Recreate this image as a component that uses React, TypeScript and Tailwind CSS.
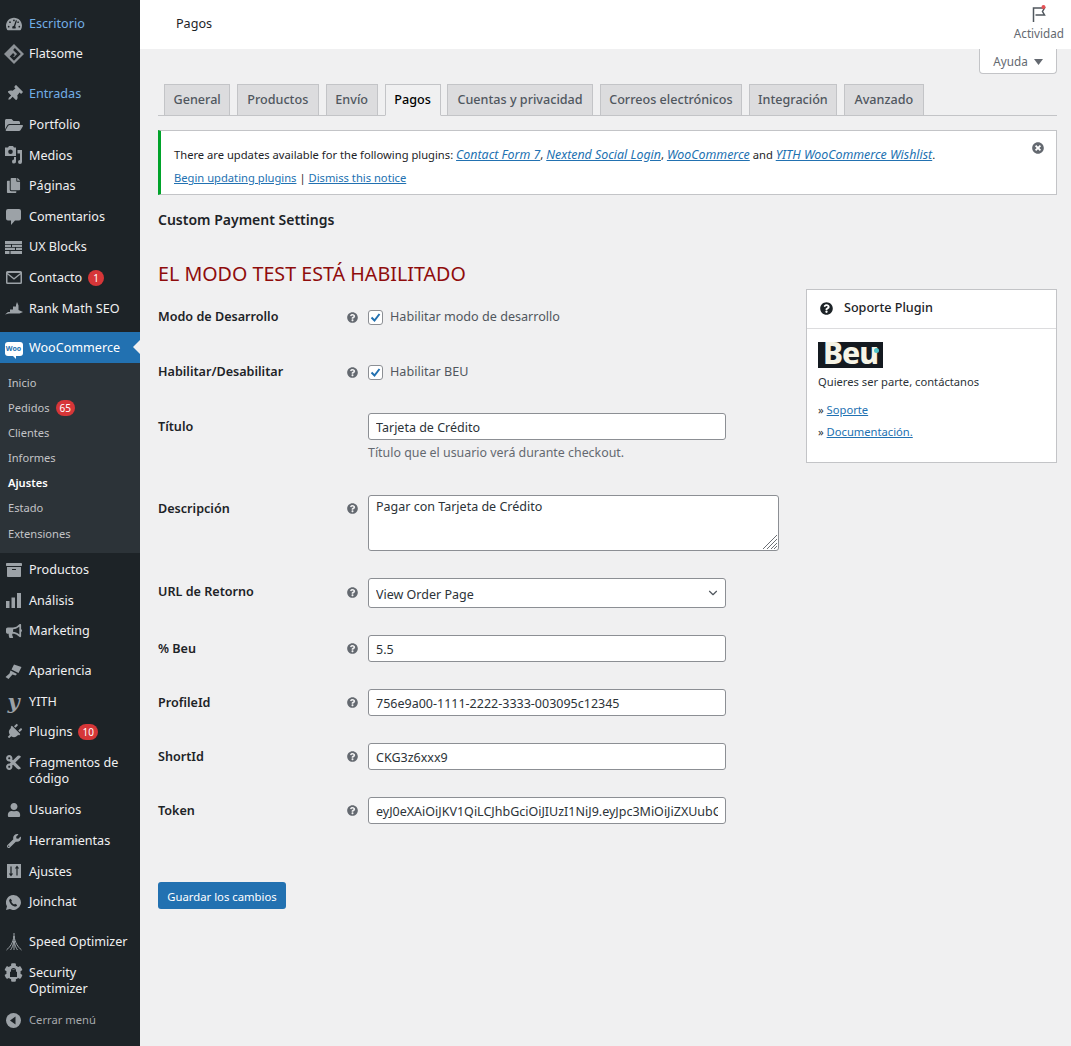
import React from 'react';
import {
  FaTachometerAlt, FaThumbtack, FaFolderOpen, FaCopy, FaArchive, FaBullhorn, FaPlug, FaCut, FaUser, FaWrench, FaCog, FaQuestionCircle, FaTimesCircle,
} from 'react-icons/fa';
import { ChevronDown } from 'lucide-react';

const font = "font-['Noto_Sans',sans-serif]";

const Diamond = () => (
  <svg width="22" height="22" viewBox="0 0 22 22" fill="none">
    <path d="M11 1 21 11 11 21 1 11Z" fill="#8c9196" />
    <path d="M11 6 16 11 11 16 8.5 13.5 11 11" stroke="#1d2327" strokeWidth="2.5" />
  </svg>
);
const Media = () => (
  <svg width="18" height="18" viewBox="0 0 18 18" fill="#9ca2a7">
    <path d="M0 1.500h3L4 0h4l1 1.500h2v8.500H0Zm5.500 2a2.300 2.300 0 1 0 0 4.600 2.300 2.300 0 0 0 0-4.600Z" fillRule="evenodd" />
    <path d="M12.500 4H17v12a2 2 0 1 1-2-2V7.500h-2.500Z" />
    <path d="M11 11v4.500a2 2 0 1 1-2-1.900V11Z" />
  </svg>
);
const Bubble = () => (
  <svg width="15" height="16" viewBox="0 0 15 16" fill="#9ca2a7">
    <path d="M2 0h11a2 2 0 0 1 2 2v7.500a2 2 0 0 1-2 2H9L5 16v-4.500H2a2 2 0 0 1-2-2V2a2 2 0 0 1 2-2Z" />
  </svg>
);
const Bricks = () => (
  <svg width="17" height="13" viewBox="0 0 17 13" fill="#9ca2a7">
    <path d="M0 0h17v3H0ZM0 3.700h6v2.300H0ZM7 3.700h10v2.300H7ZM0 6.800h10v2.300H0ZM11 6.800h6v2.300h-6ZM0 10h4.500v3H0ZM5.500 10H17v3H5.500Z" />
  </svg>
);
const Mail = () => (
  <svg width="16" height="13" viewBox="0 0 16 13" fill="#9ca2a7">
    <path d="M1.500 0h13A1.500 1.500 0 0 1 16 1.500v10a1.500 1.500 0 0 1-1.500 1.500h-13A1.500 1.500 0 0 1 0 11.500v-10A1.500 1.500 0 0 1 1.500 0Zm.2 2 6.300 5 6.300-5ZM1.500 3.500v8h13v-8L8 8.800Z" fillRule="evenodd" />
  </svg>
);
const RankMath = () => (
  <svg width="18" height="13" viewBox="0 0 18 13" fill="#9ca2a7">
    <path d="M0 12.500 3 10h2V7.500h3V4.500h3V3l1-3 1.500 3.500v4.500l4.500 2-3.500 1.500H4Z" />
  </svg>
);
const Bars = () => (
  <svg width="15" height="15" viewBox="0 0 15 15" fill="#9ca2a7">
    <path d="M0 8h3.500v7H0ZM5.500 4.500H9V15H5.500ZM11 0h4v15h-4Z" />
  </svg>
);
const Brush = () => (
  <svg width="17" height="15" viewBox="0 0 17 15" fill="#9ca2a7">
    <path d="M9 .5 16.500 3 13.500 9 6.500 5.500ZM5.500 6.500l6.500 3.500-1.500 1.500-3-1-4 4.500L.5 13l4-3.500Z" />
  </svg>
);
const Sliders = () => (
  <svg width="14" height="14" viewBox="0 0 14 14">
    <path d="M0 0h14v14H0Z" fill="#9ca2a7" />
    <path d="M4 2.500v9M2.500 9.500 4 11.500l1.500-2M10 11.500v-9M8.500 4.500 10 2.500l1.500 2" stroke="#1d2327" strokeWidth="1.200" fill="none" />
  </svg>
);
const Whats = () => (
  <svg width="15" height="15" viewBox="0 0 15 15">
    <path d="M7.500 0a7.500 7.500 0 1 1-3.600 14.100L0 15l1-3.700A7.500 7.500 0 0 1 7.500 0Z" fill="#9ca2a7" />
    <path d="M4.700 3.700 6 5.800l-.7 1c.6 1.200 1.500 2 2.800 2.700l1-.8 2 1.300c-.2 1.200-1.400 1.800-2.500 1.500C6 10.800 3.800 8.500 3.200 6 3 5 3.600 4 4.700 3.700Z" fill="#1d2327" />
  </svg>
);
const Speed = () => (
  <svg width="16" height="18" viewBox="0 0 16 18" fill="none" stroke="#9ca2a7" strokeWidth="1">
    <path d="M8 0v17M8 3C7 10 4 14 0.500 17M8 3c1 7 4 11 7.500 14M8 8c-.8 4-2 7-3.500 9M8 8c.8 4 2 7 3.500 9" />
  </svg>
);
const Collapse = () => (
  <svg width="15" height="15" viewBox="0 0 15 15">
    <circle cx="7.500" cy="7.500" r="7.500" fill="#9ca2a7" />
    <path d="M9.500 3.500v8L4 7.500Z" fill="#1d2327" />
  </svg>
);
const Gear = () => (
  <span className="relative flex items-center justify-center">
    <FaCog size={19} color="#9ca2a7" />
    <svg className="absolute left-[6px] top-[5px]" width="7" height="9" viewBox="0 0 7 9" fill="#1d2327">
      <path d="M1 4V2.500a2.500 2.500 0 0 1 5 0V4h1v5H0V4Zm1 0h3V2.500a1.500 1.500 0 0 0-3 0Z" fillRule="evenodd" />
    </svg>
  </span>
);
const WooIcon = () => (
  <span className="relative flex h-[14px] w-[18px] items-center justify-center rounded-[3px] bg-white text-[7px] font-bold leading-none text-[#2271b1]">
    Woo
    <span className="absolute -bottom-[3px] left-[8px] h-0 w-0 border-l-[3px] border-t-[3px] border-l-transparent border-t-white" />
  </span>
);
const Yith = () => <span className="font-['DejaVu_Serif',serif] text-[21px] font-bold italic leading-none text-[#9ca2a7]">y</span>;

type Item = { label: string; icon: React.ReactNode; blue?: boolean; badge?: string; gap?: boolean; two?: boolean };

const gray = '#9ca2a7';
const topItems: Item[] = [
  { label: 'Escritorio', icon: <FaTachometerAlt size={16} color={gray} />, blue: true },
  { label: 'Flatsome', icon: <Diamond />, gap: true },
  { label: 'Entradas', icon: <FaThumbtack size={16} color={gray} className="rotate-45" />, blue: true },
  { label: 'Portfolio', icon: <FaFolderOpen size={18} color={gray} /> },
  { label: 'Medios', icon: <Media /> },
  { label: 'Páginas', icon: <FaCopy size={15} color={gray} /> },
  { label: 'Comentarios', icon: <Bubble /> },
  { label: 'UX Blocks', icon: <Bricks /> },
  { label: 'Contacto', icon: <Mail />, badge: '1' },
  { label: 'Rank Math SEO', icon: <RankMath /> },
];
const subItems = ['Inicio', 'Pedidos', 'Clientes', 'Informes', 'Ajustes', 'Estado', 'Extensiones'];
const bottomItems: Item[] = [
  { label: 'Productos', icon: <FaArchive size={16} color={gray} /> },
  { label: 'Análisis', icon: <Bars /> },
  { label: 'Marketing', icon: <FaBullhorn size={16} color={gray} />, gap: true },
  { label: 'Apariencia', icon: <Brush /> },
  { label: 'YITH', icon: <Yith /> },
  { label: 'Plugins', icon: <FaPlug size={16} color={gray} className="rotate-45" />, badge: '10' },
  { label: 'Fragmentos de código', icon: <FaCut size={17} color={gray} />, two: true },
  { label: 'Usuarios', icon: <FaUser size={14} color={gray} /> },
  { label: 'Herramientas', icon: <FaWrench size={14} color={gray} /> },
  { label: 'Ajustes', icon: <Sliders /> },
  { label: 'Joinchat', icon: <Whats />, gap: true },
  { label: 'Speed Optimizer', icon: <Speed /> },
  { label: 'Security Optimizer', icon: <Gear />, two: true },
];

const Badge = ({ text }: { text: string }) => (
  <span className="ml-[6px] flex h-[16px] min-w-[16px] items-center justify-center rounded-full bg-[#d63638] px-[4px] text-[10px] leading-none text-white">{text}</span>
);

const MenuRow = ({ item }: { item: Item }) => (
  <div className={`flex items-start ${item.two ? 'h-[47.400px]' : 'h-[30.6px]'} ${item.gap ? 'mb-[9.4px]' : ''}`}>
    <span className="flex h-[30.6px] w-[26px] shrink-0 items-center justify-center pl-[1px]">{item.icon}</span>
    <span className={`ml-[3px] flex max-w-[105px] items-center pt-[7.500px] text-[12.6px] leading-[16px] ${item.blue ? 'text-[#72aee6]' : 'text-[#f0f0f1]'}`}>
      {item.label}
      {item.badge && <Badge text={item.badge} />}
    </span>
  </div>
);

const Sidebar = () => (
  <aside className="min-h-[1046px] w-[140px] shrink-0 bg-[#1d2327] pt-[8.300px]">
    {topItems.map((i) => <MenuRow key={i.label} item={i} />)}
    <div className="relative mt-[8.700px] flex h-[31px] items-center bg-[#2271b1] pt-[2px]">
      <span className="flex w-[26px] justify-center pl-[1px]"><WooIcon /></span>
      <span className="ml-[3px] text-[12.6px] text-white">WooCommerce</span>
      <span className="absolute right-0 top-[8px] h-0 w-0 border-y-[7px] border-r-[7px] border-y-transparent border-r-[#f0f0f1]" />
    </div>
    <div className="mb-[1.300px] h-[190px] bg-[#2c3338] pt-[7px]">
      {subItems.map((s) => (
        <div key={s} className={`flex h-[25.170px] items-center pl-[8px] text-[11.100px] ${s === 'Ajustes' ? 'font-semibold text-white' : 'text-[#c3c4c7]'}`}>
          {s}
          {s === 'Pedidos' && <Badge text="65" />}
        </div>
      ))}
    </div>
    {bottomItems.map((i) => <MenuRow key={i.label} item={i} />)}
    <div className="flex h-[30.6px] items-center">
      <span className="flex w-[26px] justify-center pl-[1px]"><Collapse /></span>
      <span className="ml-[3px] text-[11.200px] text-[#a7aaad]">Cerrar menú</span>
    </div>
  </aside>
);

const tabs = [
  { label: 'General', w: 'w-[65.600px]' },
  { label: 'Productos', w: 'w-[82px]' },
  { label: 'Envío', w: 'w-[52.200px]' },
  { label: 'Pagos', w: 'w-[56px]' },
  { label: 'Cuentas y privacidad', w: 'w-[145.400px]' },
  { label: 'Correos electrónicos', w: 'w-[142.600px]' },
  { label: 'Integración', w: 'w-[88px]' },
  { label: 'Avanzado', w: 'w-[80.200px]' },
];

const Help = () => <FaQuestionCircle size={11} color="#646970" className="shrink-0" />;

const Check = () => (
  <span className="flex h-[15px] w-[15px] items-center justify-center rounded-[3px] border border-[#8c8f94] bg-white">
    <svg width="13" height="13" viewBox="0 0 13 13" fill="none" stroke="#2271b1" strokeWidth="2"><path d="M2.500 6.500 5.500 9.500 10.500 3" /></svg>
  </span>
);

const Field = ({ value }: { value: string }) => (
  <input readOnly value={value} className="h-[27px] w-[358px] rounded-[3px] border border-[#8c8f94] bg-white px-[7px] pt-[1px] text-[12.500px] text-[#2c3338] outline-none" />
);

type RowProps = { label: string; className: string; help?: boolean; labelTop?: string; helpTop?: string; children: React.ReactNode };

const Row = ({ label, className, help = true, labelTop = 'mt-[6px]', helpTop = 'mt-[7.500px]', children }: RowProps) => (
  <div className={`flex items-start ${className}`}>
    <span className={`w-[188px] text-[12.6px] font-semibold leading-[16px] text-[#1d2327] ${labelTop}`}>{label}</span>
    <span className={`ml-[1px] block h-[11px] w-[21px] leading-none ${helpTop}`}>{help && <Help />}</span>
    <div>{children}</div>
  </div>
);

const NoticeLink = ({ children }: { children: React.ReactNode }) => (
  <a className="text-[12.400px] italic text-[#2271b1] underline">{children}</a>
);

const Notice = () => (
  <div className="relative mt-[14px] h-[65px] border border-l-[3px] border-[#c3c4c7] border-l-[#00a32a] bg-white pl-[13px] pt-[15px] text-[11.200px] leading-[18px] text-[#1d2327]">
    <p>
      There are updates available for the following plugins:{' '}
      <NoticeLink>Contact Form 7</NoticeLink>,{' '}
      <NoticeLink>Nextend Social Login</NoticeLink>,{' '}
      <NoticeLink>WooCommerce</NoticeLink> and{' '}
      <NoticeLink>YITH WooCommerce Wishlist</NoticeLink>.
    </p>
    <p className="mt-[5px]">
      <a className="text-[#2271b1] underline">Begin updating plugins</a> | <a className="text-[#2271b1] underline">Dismiss this notice</a>
    </p>
    <FaTimesCircle size={12} color="#646970" className="absolute right-[12px] top-[11px]" />
  </div>
);

const SupportCard = () => (
  <div className="mt-[59px] h-[174px] w-[251px] border border-[#c3c4c7] bg-white">
    <div className="flex h-[39px] items-center border-b border-[#dcdcde] pb-[2px] pl-[13px] text-[12.6px] font-medium text-[#1d2327]">
      <FaQuestionCircle size={13} color="#1d2327" />
      <span className="ml-[11px]">Soporte Plugin</span>
    </div>
    <div className="pl-[11px] pt-[13px] text-[11.200px] text-[#2c3338]">
      <div className="relative flex h-[26px] w-[65px] items-center justify-center bg-[#141a20] pb-[5px] text-[30px] font-extrabold leading-[26px] tracking-[-1px] text-[#f6f4e6]">
        Beu
        <span className="absolute right-[4px] top-[6px] h-[5px] w-[5px] rounded-full bg-[#4fc3c9]" />
      </div>
      <p className="mt-[6px] leading-[16px]">Quieres ser parte, contáctanos</p>
      <p className="mt-[12px] leading-[16px]">» <a className="text-[#2271b1] underline">Soporte</a></p>
      <p className="mt-[6px] leading-[16px]">» <a className="text-[#2271b1] underline">Documentación.</a></p>
    </div>
  </div>
);

export default function App() {
  return (
    <div className={`flex min-h-[1046px] bg-[#f0f0f1] ${font}`}>
      <Sidebar />
      <main className="min-w-0 flex-1">
        <header className="flex h-[49px] items-start justify-between bg-white pl-[36px] pr-[7px]">
          <span className="pt-[15px] text-[12.6px] leading-[18px] text-[#1d2327]">Pagos</span>
          <div className="flex flex-col items-center pt-[5px]">
            <svg width="18" height="18" viewBox="0 0 18 18" fill="none">
              <path d="M3.500 17V3h11l-2 3.500 2 3.500h-9" stroke="#50575e" strokeWidth="1.500" />
              <circle cx="13.500" cy="2" r="2" fill="#e65054" />
            </svg>
            <span className="mt-[2px] text-[11.700px] leading-[16px] text-[#646970]">Actividad</span>
          </div>
        </header>
        <div className="pl-[18px] pr-[14px]">
          <div className="flex justify-end">
            <div className="flex h-[25px] w-[78px] items-center justify-center gap-[6px] rounded-b-[4px] border border-t-0 border-[#c3c4c7] bg-white pt-[1px] text-[11.700px] text-[#646970]">
              Ayuda
              <svg width="9" height="6" viewBox="0 0 9 6" fill="#646970"><path d="M0 0h9L4.500 6Z" /></svg>
            </div>
          </div>
          <nav className="mt-[10px] flex h-[32px] gap-[6.800px] border-b border-[#c3c4c7] pl-[6.400px]">
            {tabs.map((t) => (
              <span key={t.label} className={`flex h-[32px] items-center justify-center border border-[#c3c4c7] text-[12.6px] font-medium ${t.w} ${t.label === 'Pagos' ? 'border-b-[#f0f0f1] bg-[#f0f0f1] text-black' : 'bg-[#dcdcde] text-[#50575e]'}`}>
                {t.label}
              </span>
            ))}
          </nav>
          <Notice />
          <h2 className="mt-[15px] text-[14px] font-semibold leading-[20px] text-[#1d2327]">Custom Payment Settings</h2>
          <div className="flex justify-between">
            <div className="w-[648px]">
              <h2 className="mt-[30px] text-[19.700px] font-normal leading-[28px] text-[#8f0c0c]">EL MODO TEST ESTÁ HABILITADO</h2>
              <Row label="Modo de Desarrollo" labelTop="" helpTop="mt-[2.500px]" className="mt-[21px]">
                <label className="flex items-center text-[12.6px] leading-[16px] text-[#50575e]"><Check /><span className="ml-[7px]">Habilitar modo de desarrollo</span></label>
              </Row>
              <Row label="Habilitar/Desabilitar" labelTop="" helpTop="mt-[2.500px]" className="mt-[39px]">
                <label className="flex items-center text-[12.6px] leading-[16px] text-[#50575e]"><Check /><span className="ml-[7px]">Habilitar BEU</span></label>
              </Row>
              <Row label="Título" help={false} className="mt-[33px]">
                <Field value="Tarjeta de Crédito" />
                <p className="mt-[5px] text-[12.400px] leading-[16px] text-[#646970]">Título que el usuario verá durante checkout.</p>
              </Row>
              <Row label="Descripción" className="mt-[34px]">
                <div className="relative h-[56px] w-[411px]">
                  <textarea readOnly defaultValue="Pagar con Tarjeta de Crédito" className="block h-[56px] w-[411px] resize-none rounded-[3px] border border-[#8c8f94] bg-white px-[7px] py-[2px] text-[12.500px] leading-[18px] text-[#2c3338] outline-none" />
                  <svg className="absolute bottom-[2px] right-[2px]" width="14" height="14" viewBox="0 0 14 14" stroke="#6b6f74" strokeWidth="1">
                    <path d="M0 14 14 0M4 14 14 4M8 14l6-6M11 14l3-3" />
                  </svg>
                </div>
              </Row>
              <Row label="URL de Retorno" helpTop="mt-[8.500px]" className="mt-[27px]">
                <div className="relative h-[30px] w-[358px]">
                  <select className="h-[30px] w-full appearance-none rounded-[3px] border border-[#8c8f94] bg-white px-[7px] pt-[4px] text-[12.500px] text-[#2c3338] outline-none">
                    <option>View Order Page</option>
                  </select>
                  <ChevronDown size={14} color="#50575e" className="absolute right-[6px] top-[8px]" />
                </div>
              </Row>
              <Row label="% Beu" className="mt-[27px]"><Field value="5.5" /></Row>
              <Row label="ProfileId" className="mt-[27px]"><Field value="756e9a00-1111-2222-3333-003095c12345" /></Row>
              <Row label="ShortId" className="mt-[27px]"><Field value="CKG3z6xxx9" /></Row>
              <Row label="Token" className="mt-[27px]"><Field value="eyJ0eXAiOiJKV1QiLCJhbGciOiJIUzI1NiJ9.eyJpc3MiOiJiZXUubGF0IiwiYXVkIjoiYmV1In0" /></Row>
              <button className="mt-[58px] h-[27px] w-[128px] rounded-[3px] bg-[#2271b1] pt-[3px] text-[11.300px] text-white">Guardar los cambios</button>
            </div>
            <SupportCard />
          </div>
        </div>
      </main>
    </div>
  );
}
